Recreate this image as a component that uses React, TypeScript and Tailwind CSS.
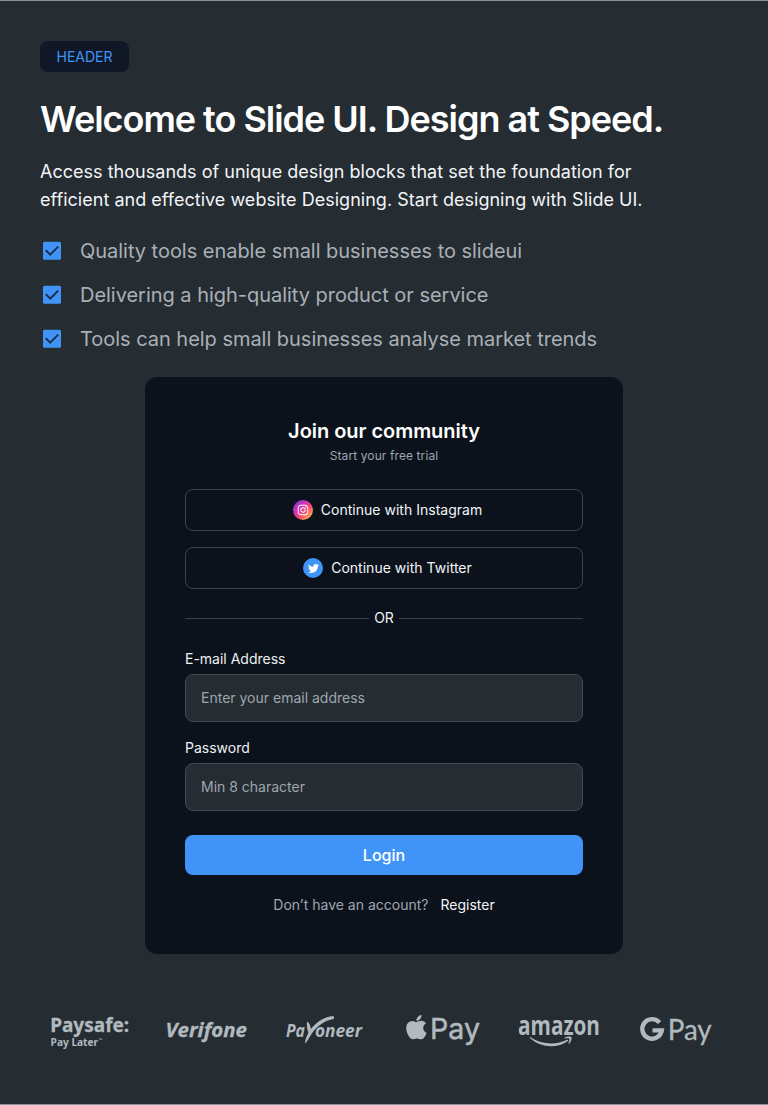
import React from "react";
import { FaApple, FaTwitter, FaInstagram } from "react-icons/fa";

const features = [
  "Quality tools enable small businesses to slideui",
  "Delivering a high-quality product or service",
  "Tools can help small businesses analyse market trends",
];

function CheckBox() {
  return (
    <svg viewBox="0 0 24 24" className="size-6 shrink-0" fill="none">
      <rect x="3" y="2.7" width="18" height="18" rx="1.5" fill="#4094f7" />
      <path d="M5.8 11.2l4.400 4.400 8-8" stroke="#1a2c44" strokeWidth="1.9" />
    </svg>
  );
}

function SocialButton({ icon, children }: { icon: React.ReactNode; children: React.ReactNode }) {
  return (
    <button className="flex h-[42px] w-full items-center justify-center gap-2 rounded-lg border border-[#3b424c] pl-[7px] text-sm tracking-[0.02px] text-[#f2f5f8]">
      {icon}
      {children}
    </button>
  );
}

function Field({ label, placeholder, type }: { label: string; placeholder: string; type: string }) {
  return (
    <label className="flex flex-col gap-[5px]">
      <span className="text-sm leading-5 text-[#eef1f4]">{label}</span>
      <input
        type={type}
        placeholder={placeholder}
        className="h-12 w-full rounded-lg border border-[#414952] bg-[#252c32] px-[15px] pb-0.5 text-sm placeholder:text-[#9fa6ae]"
      />
    </label>
  );
}

function Logo({ label, children }: { label: string; children: React.ReactNode }) {
  return (
    <svg viewBox="0 0 117 50" className="h-[50px] w-[117px] overflow-visible text-[#b0babf]" fill="#b0babf" aria-label={label}>
      {children}
    </svg>
  );
}

function Logos() {
  return (
    <div className="mt-[51px] flex pl-[31px]">
      <Logo label="Paysafe">
        <text x="19.2" y="26.500" textLength="79" lengthAdjust="spacingAndGlyphs" stroke="#b0babf" strokeWidth="0.3" className="font-['Noto_Sans'] text-[19.5px] font-bold">Paysafe:</text>
        <text x="19.6" y="40.7" textLength="47.500" lengthAdjust="spacingAndGlyphs" className="font-['Noto_Sans'] text-[11.2px] font-bold">Pay Later</text>
        <text x="67.500" y="36.500" className="font-['Noto_Sans'] text-[5px] font-bold">™</text>
      </Logo>
      <Logo label="Verifone">
        <text x="17.5" y="31.7" textLength="81.500" lengthAdjust="spacingAndGlyphs" stroke="#b0babf" strokeWidth="0.3" className="font-['Open_Sans'] text-[19px] font-bold italic">Verifone</text>
      </Logo>
      <Logo label="Payoneer">
        <text x="21" y="31.7" textLength="19" lengthAdjust="spacingAndGlyphs" className="font-['Open_Sans'] text-[17px] font-bold italic">Pa</text>
        <path d="M42 16.500c2.600 1.500 4.100 5 3.900 10.500l-1.900 1.800c-1.600-3.200-2.500-7.800-2-12.300z" />
        <path d="M40 38.500C40.300 33 43.500 26.500 48 21.600 53.500 15.400 61 11.100 68.300 11.200c1 0 1 2.200.2 2.700C60.500 15.200 53.500 20.200 49 25.600 45.500 29.800 43.700 34.500 41 37.800z" />
        <text x="50" y="31.7" textLength="47" lengthAdjust="spacingAndGlyphs" className="font-['Open_Sans'] text-[17px] font-bold italic">oneer</text>
      </Logo>
      <Logo label="Apple Pay">
        <FaApple x="20.5" y="8.3" size="27.8" />
        <text x="48" y="33.7" textLength="50" lengthAdjust="spacingAndGlyphs" stroke="#b0babf" strokeWidth="0.5" className="font-['Inter'] text-[29px] font-normal">Pay</text>
      </Logo>
      <Logo label="Amazon">
        <text x="19" y="30.3" textLength="82" lengthAdjust="spacingAndGlyphs" className="font-['Open_Sans'] text-[26px] font-bold">amazon</text>
        <path d="M31.500 32.200c11 7.400 25.500 8.200 36.600 2.600.9-.4 1.600.6.800 1.200-10.500 7.800-27 7.200-37.900-2.900-.6-.6-.2-1.300.5-.9z" />
        <path d="M65.500 32.800c1.800-1.300 5-1.800 6.800-1.100.8 1.700-.2 5.200-2.300 7-.4.300-.8.100-.6-.4.600-1.500 1.300-3.700.9-4.500-.5-.7-2.900-.6-4.500-.4-.5 0-.7-.3-.3-.6z" />
      </Logo>
      <Logo label="Google Pay">
        <path d="M43.600 17.600a9.800 9.800 0 1 0 2.200 7.800H36.500" fill="none" stroke="#b0babf" strokeWidth="4.400" />
        <text x="51.700" y="34.500" textLength="44" lengthAdjust="spacingAndGlyphs" stroke="#b0babf" strokeWidth="0.3" className="font-['Lato'] text-[28.5px] font-normal">Pay</text>
      </Logo>
    </div>
  );
}

export default function App() {
  return (
    <main className="h-[1105px] w-full overflow-hidden border-y border-[#89939a] bg-[#252c32] font-['Inter',sans-serif]">
      <header className="flex flex-col items-start px-10 pt-10">
        <span className="flex h-[31px] w-[89px] items-center justify-center rounded-lg bg-[#101828] text-sm text-[#4094f7]">
          HEADER
        </span>
        <h1 className="mt-[25px] text-4xl leading-[44px] font-semibold tracking-[-1.02px] whitespace-nowrap text-white">
          Welcome to Slide UI. Design at Speed.
        </h1>
        <p className="mt-[17px] text-lg leading-7 tracking-[0.02px] whitespace-nowrap text-[#f3f5f7]">
          Access thousands of unique design blocks that set the foundation for
          <br />
          efficient and effective website Designing. Start designing with Slide UI.
        </p>
        <ul className="mt-[21px] flex flex-col gap-3">
          {features.map((feature) => (
            <li key={feature} className="flex h-8 items-center gap-4 text-xl tracking-[-0.03px] text-[#a9b0b6]">
              <CheckBox />
              <span>{feature}</span>
            </li>
          ))}
        </ul>
      </header>

      <section className="mx-auto mt-[22px] flex h-[577px] w-[478px] flex-col rounded-xl bg-[#0c121b] px-10 pt-10">
        <h2 className="text-center text-xl leading-7 font-semibold tracking-[-0.04px] text-white">Join our community</h2>
        <p className="mt-px text-center text-xs leading-5 tracking-[0.1px] text-[#9aa7b3]">Start your free trial</p>
        <div className="mt-[23px] flex flex-col gap-4">
          <SocialButton
            icon={
              <span className="flex size-5 items-center justify-center rounded-full bg-[linear-gradient(135deg,#7a35e8_5%,#d534b0_38%,#f5486b_60%,#ffd34d_95%)]">
                <FaInstagram className="size-[12px] text-white" />
              </span>
            }
          >
            Continue with Instagram
          </SocialButton>
          <SocialButton
            icon={
              <span className="flex size-5 items-center justify-center rounded-full bg-[#4094f7]">
                <FaTwitter className="size-[11px] text-white" />
              </span>
            }
          >
            Continue with Twitter
          </SocialButton>
        </div>
        <div className="mt-[19px] flex h-5 items-center gap-[5px] text-sm text-[#eef1f4]">
          <span className="h-px flex-1 bg-[#3b424c]" />
          OR
          <span className="h-px flex-1 bg-[#3b424c]" />
        </div>
        <form className="mt-[21px] flex flex-col gap-4">
          <Field label="E-mail Address" placeholder="Enter your email address" type="email" />
          <Field label="Password" placeholder="Min 8 character" type="password" />
          <button type="button" className="mt-2 h-10 rounded-lg bg-[#4094f7] text-base font-medium text-white">
            Login
          </button>
        </form>
        <p className="mt-5 flex justify-center gap-3 text-sm leading-5 text-[#9fa6ae]">
          Don’t have an account?
          <a className="text-[#f2f5f8]">Register</a>
        </p>
      </section>

      <Logos />
    </main>
  );
}
